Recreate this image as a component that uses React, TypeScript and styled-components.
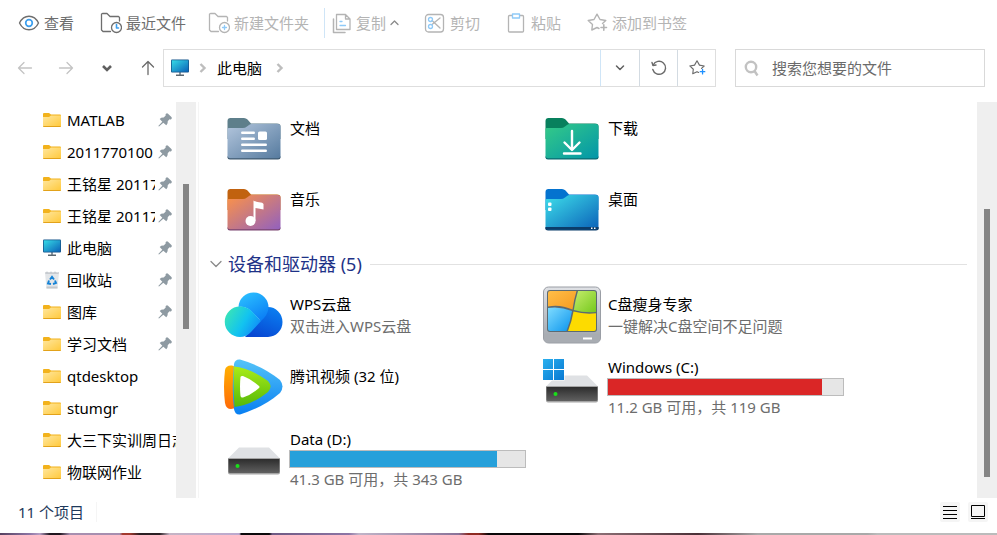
import React from 'react';
import styled, { createGlobalStyle, css } from 'styled-components';

const GlobalStyle = createGlobalStyle`
  * { box-sizing: border-box; }
  body {
    margin: 0;
    background: #fff;
    color: #000;
    font: 15px/22px "Noto Sans", "Noto Sans CJK SC", sans-serif;
  }
  button, input { font: inherit; }
`;

const Window = styled.div`
  display: flex;
  flex-direction: column;
  min-height: 100vh;
  background: #fff;
`;

/* ---------- toolbar ---------- */

const Toolbar = styled.div`
  display: flex;
  align-items: center;
  height: 46px;
  padding-left: 18px;
`;

const ToolGroup = styled.div<{ $gap: number }>`
  display: flex;
  gap: ${(p) => p.$gap}px;
`;

const ToolButton = styled.button<{ $wide?: boolean }>`
  display: flex;
  align-items: center;
  gap: 4px;
  padding: 0;
  border: 0;
  background: none;
  color: #6e6e6e;
  white-space: nowrap;
  ${(p) => p.$wide && css`min-width: 60px;`}
  &:disabled { color: #b4b4b4; }
`;

const ToolDivider = styled.span`
  width: 1px;
  height: 30px;
  margin: 0 5px 0 15px;
  background: #cfe5f7;
`;

/* ---------- address row ---------- */

const AddressRow = styled.div`
  display: flex;
  height: 38px;
  margin-top: 3px;
  padding-right: 12px;
`;

const NavButtons = styled.nav`
  display: flex;
  align-items: center;
  gap: 21px;
  width: 163px;
  padding-left: 15px;
`;

const NavButton = styled.button`
  display: flex;
  justify-content: center;
  width: 20px;
  padding: 0;
  border: 0;
  background: none;
`;

const AddressBar = styled.div`
  display: flex;
  flex: 1;
  align-items: stretch;
  border: 1px solid #dedede;
`;

const Crumbs = styled.div`
  display: flex;
  flex: 1;
  align-items: center;
  gap: 10px;
  padding-left: 7px;
`;

const CrumbLink = styled.a`
  padding-right: 4px;
  color: #000;
  text-decoration: none;
`;

const AddressButton = styled.button<{ $first?: boolean }>`
  display: flex;
  align-items: center;
  justify-content: center;
  width: ${(p) => (p.$first ? 39 : 38)}px;
  padding: 0;
  border: 0;
  border-left: 1px solid ${(p) => (p.$first ? '#cfe5f7' : '#d3dbe2')};
  background: none;
`;

const SearchBox = styled.label`
  display: flex;
  align-items: center;
  gap: 12px;
  width: 250px;
  margin-left: 19px;
  padding: 0 8px;
  border: 1px solid #d9d9d9;
`;

const SearchInput = styled.input`
  flex: 1;
  min-width: 0;
  padding: 0;
  border: 0;
  outline: 0;
  background: none;
  &::placeholder { color: #6b6b6b; opacity: 1; }
`;

/* ---------- body ---------- */

const Body = styled.div`
  display: flex;
  flex: 1;
  margin-top: 15px;
`;

const Sidebar = styled.ul`
  width: 176px;
  margin: 0;
  padding: 2px 0 0 43px;
  list-style: none;
`;

const SideItem = styled.li`
  display: flex;
  align-items: center;
  height: 32px;
`;

const SideLink = styled.a`
  display: flex;
  flex: 1;
  align-items: center;
  gap: 6px;
  min-width: 0;
  color: #000;
  text-decoration: none;
`;

const SideLabel = styled.span`
  flex: 1;
  overflow: hidden;
  white-space: nowrap;
  line-height: 32px;
`;

const PinSlot = styled.span`
  display: flex;
  width: 21px;
  padding-left: 3px;
`;

const ScrollTrack = styled.div`
  flex: none;
  width: 20px;
  padding: 0 7px;
  background: #efefef;
`;

const ScrollThumb = styled.div<{ $offset: number; $length: number }>`
  height: ${(p) => p.$length}px;
  margin-top: ${(p) => p.$offset}px;
  background: #858585;
`;

const Content = styled.main`
  flex: 1;
  min-width: 0;
  margin-left: 2px;
  padding: 1px 10px 0 11px;
  border-left: 1px solid #f5f5f5;
`;

const Tiles = styled.div<{ $row: number }>`
  display: grid;
  grid-template-columns: repeat(auto-fill, 318px);
  grid-auto-rows: ${(p) => p.$row}px;
  padding-left: 14px;
`;

const Tile = styled.article`
  display: flex;
  gap: 5px;
`;

const TileIcon = styled.span`
  display: flex;
  align-items: center;
  width: 60px;
  svg { flex: none; }
`;

const TileInfo = styled.div<{ $drive?: boolean }>`
  display: flex;
  flex-direction: column;
  padding-top: ${(p) => (p.$drive ? 6 : 15)}px;
`;

const TileName = styled.span`
  padding-left: 1px;
  line-height: 21px;
  white-space: nowrap;
`;

const TileNote = styled.span`
  padding-left: 1px;
  color: #6d6d6d;
  white-space: nowrap;
`;

const Meter = styled.div`
  width: 237px;
  height: 18px;
  border: 1px solid #bcbcbc;
  background: #e6e6e6;
`;

const MeterFill = styled.div<{ $color: string }>`
  height: 100%;
  background: ${(p) => p.$color};
`;

const SectionHead = styled.h2`
  display: flex;
  align-items: center;
  gap: 6px;
  height: 34px;
  margin: 0;
  padding-top: 4px;
  color: #1e3287;
  font-size: 18px;
  font-weight: 400;
  &::after {
    content: "";
    flex: 1;
    height: 1px;
    margin-left: 2px;
    background: #e2e2e2;
  }
`;

/* ---------- status bar ---------- */

const StatusBar = styled.footer`
  display: flex;
  align-items: flex-start;
  height: 35px;
  padding: 4px 9px 0 18px;
`;

const StatusText = styled.span`
  padding-right: 12px;
  border-right: 1px solid #f5f5f5;
  color: #1e395b;
  line-height: 20px;
`;

const ViewButtons = styled.div`
  display: flex;
  gap: 8px;
  margin-left: auto;
`;

const ViewButton = styled.button`
  display: flex;
  width: 20px;
  height: 20px;
  padding: 0;
  border: 0;
  border-radius: 2px;
  background: #f5f5f5;
`;

const DesktopEdge = styled.div`
  height: 2px;
  background: linear-gradient(90deg,
    #55405f 0, #8d76a6 3%, #b79fc4 4%, #20161f 5%, #20161f 6%, #a78fb0 7%, #a78fb0 12%,
    #a33a2e 12.3%, #a33a2e 13%, #2b2024 14%, #2b2024 16%, #c5b4c5 17%, #bba9cf 24%,
    #0c0a0c 24.2%, #0c0a0c 27%, #6f5a84 27.3%, #8d76a6 35%, #c0b4c8 36%, #8a7399 46%,
    #8e2b22 47%, #8e2b22 48%, #0a0809 49%, #0a0809 58%, #8b6e74 60%, #4a3037 70%,
    #a9a9a9 76%, #a9a9a9 87%, #bbb 88%, #bbb 100%);
`;

/* ---------- icons ---------- */

const line = { fill: 'none', strokeLinecap: 'round', strokeLinejoin: 'round' } as const;

const EyeIcon = () => (
  <svg width="22" height="22" viewBox="0 0 22 22" {...line} strokeWidth="1.4">
    <path d="M1.5 11C3.8 6.300 7 4.200 11 4.200S18.200 6.300 20.500 11C18.200 15.700 15 17.800 11 17.800S3.800 15.700 1.500 11Z" stroke="#6e6e6e" />
    <circle cx="11" cy="11" r="3.300" stroke="#3d9fee" strokeWidth="1.700" />
  </svg>
);

const FolderBadge = ({ color, children }: { color: string; children: React.ReactNode }) => (
  <svg width="22" height="22" viewBox="0 0 22 22" {...line} strokeWidth="1.300">
    <path d="M10.500 19.500H3L1.500 18V2L2.500 1.500H7L10 4.500H18.500L19.500 5.500V9" stroke={color} />
    <circle cx="16.500" cy="15.500" r="5" stroke={color} fill="#fff" />
    {children}
  </svg>
);

const CopyIcon = () => (
  <svg width="22" height="22" viewBox="0 0 22 22" {...line} stroke="#b4b4b4" strokeWidth="1.300">
    <path d="M6.500 2.500H15.500L20 7V17.500H6.500ZM15.500 2.500V7H20" />
    <path d="M3.500 7V20.500H15" strokeWidth="1.500" />
    <path d="M10 9.500H12M10 13.500H15.500" stroke="#8fcaf8" />
  </svg>
);

const CutIcon = () => (
  <svg width="22" height="22" viewBox="0 0 22 22" {...line} stroke="#b4b4b4" strokeWidth="1.300">
    <rect x="1.500" y="2.500" width="18" height="17.500" rx="3" />
    <path d="M8 12.500 16 6M8 8.500 16 16" />
    <circle cx="6.500" cy="7.500" r="2" stroke="#8fcaf8" />
    <circle cx="6.500" cy="14.500" r="2" stroke="#8fcaf8" />
  </svg>
);

const PasteIcon = () => (
  <svg width="22" height="22" viewBox="0 0 22 22" {...line} stroke="#b4b4b4" strokeWidth="1.300">
    <rect x="3.500" y="3.500" width="15" height="16.500" rx="1" />
    <path d="M7.500 2H14.500V6H7.500Z" stroke="#8fcaf8" fill="#fff" />
  </svg>
);

const StarPlus = ({ size, color, plus }: { size: number; color: string; plus: string }) => (
  <svg width={size} height={size} viewBox="0 0 22 22" {...line} stroke={color} strokeWidth="1.400">
    <path d="M13 16.500 11 15.500 5.800 18 6.500 12.500 2.200 8.500 8 7.500 11 2.200 14 7.500 19.800 8.500 16.500 11.500" />
    <path d="M15 15.500H20.500M17.800 12.800V18.200" stroke={plus} strokeWidth="1.600" />
  </svg>
);

const CaretUp = () => (
  <svg width="9" height="8" viewBox="0 0 9 8" {...line} stroke="#8a8a8a" strokeWidth="1.300">
    <path d="M1 5.500 4.500 2 8 5.500" />
  </svg>
);

const Arrow = ({ d, color }: { d: string; color: string }) => (
  <svg width="16" height="16" viewBox="0 0 16 16" {...line} stroke={color} strokeWidth="1.300">
    <path d={d} />
  </svg>
);

const CrumbChevron = () => (
  <svg width="8" height="10" viewBox="0 0 8 10" fill="none" stroke="#bdbdbd" strokeWidth="2.400">
    <path d="M1.500 1 5.500 5 1.500 9" />
  </svg>
);

const MonitorIcon = () => (
  <svg width="18" height="18" viewBox="0 0 18 18">
    <defs>
      <linearGradient id="screen" x1="0" y1="0" x2="1" y2="1">
        <stop offset="0" stopColor="#36dbe6" />
        <stop offset="1" stopColor="#0b62b8" />
      </linearGradient>
    </defs>
    <path d="M8 13H10V16H8Z" fill="#8b98a2" />
    <path d="M5 15.500H13V17H5Z" fill="#5b6770" />
    <rect y=".5" width="18" height="13" rx="1" fill="#17568c" />
    <rect x=".8" y="1.300" width="16.400" height="11.400" fill="url(#screen)" />
  </svg>
);

const SmallFolder = () => (
  <svg width="18" height="18" viewBox="0 0 18 18">
    <defs>
      <linearGradient id="yellow" x1="0" y1="0" x2="1" y2="1">
        <stop offset="0" stopColor="#ffe79f" />
        <stop offset="1" stopColor="#ffc93c" />
      </linearGradient>
    </defs>
    <path d="M0 3Q0 2 1 2H6L8 3.500H17Q18 3.500 18 4.500V8H0Z" fill="#f2b21c" />
    <path d="M0 6H6L8 4.500H18V15.500H0Z" fill="url(#yellow)" />
    <path d="M0 15H18L17.500 16H.5Z" fill="#e2a21a" />
  </svg>
);

const RecycleIcon = () => (
  <svg width="18" height="18" viewBox="0 0 18 18">
    <path d="M2 2 16 2 14.500 17.500H3.500Z" fill="#e3e6e9" />
    <path d="M2 1.500 4 .5 6 1.500 8 .5 10 1.500 12 .5 14 1.500 16 1 15.500 3H2.500Z" fill="#c7cbd0" />
    <path d="M3.500 15.500H14.500V17.500H3.500Z" fill="#c3c8cc" />
    <path d="M7 8.500 9 5.800 11 8.500M12 9.500 13 12 10 13M8 13 5 12.500 6 9.500" fill="none" stroke="#1583d6" strokeWidth="1.900" />
  </svg>
);

const PinIcon = () => (
  <svg width="14" height="14" viewBox="0 0 14 14" fill="#8e9aa2">
    <path d="M8 .8Q9-.1 10 .7L13.400 4Q14.200 5 13.400 5.900 12.500 6.700 11.500 6.300L9.700 8.200Q10 10.600 8.300 12.200L5.300 9.700 1 13.600.3 13 4.300 8.700 1.700 5.900Q3.400 4.200 5.700 4.500L7.700 2.500Q7.300 1.500 8 .8Z" />
  </svg>
);

type FolderArt = { id: string; tab: string; from: string; to: string; edge: string; glyph: React.ReactNode };

const BigFolder = ({ id, tab, from, to, edge, glyph }: FolderArt) => (
  <svg width="60" height="60" viewBox="0 0 60 60">
    <defs>
      <linearGradient id={id} x1="0" y1="0" x2="1" y2="1">
        <stop offset="0" stopColor={from} />
        <stop offset="1" stopColor={to} />
      </linearGradient>
    </defs>
    <path d="M3.500 12Q3.500 9 6.500 9H20Q22 9 23.500 10.500L27 14.500H53Q56.500 14.500 56.500 17V30H3.500Z" fill={tab} />
    <path d="M3.500 20Q3.500 19 5 19H19Q21 19 23 17.500L25 16Q26 15 28 15H53.500Q56.500 15 56.500 18V47.500Q56.500 50 54 50H6Q3.500 50 3.500 47.500Z" fill={`url(#${id})`} />
    <path d="M3.500 47V48Q3.500 50.500 6 50.500H54Q56.500 50.500 56.500 48V47Q56 49.200 54 49.200H6Q4 49.200 3.500 47Z" fill={edge} />
    {glyph}
  </svg>
);

const folderArt: Record<string, FolderArt> = {
  documents: {
    id: 'fDoc', tab: '#5e7f8b', from: '#b3c6dd', to: '#557a9e', edge: '#3f5a70',
    glyph: (
      <g fill="#fff">
        <rect x="17" y="22.500" width="14" height="2.500" rx="1.200" />
        <rect x="17" y="28.500" width="14" height="2.500" rx="1.200" />
        <rect x="17" y="34.500" width="26" height="2.500" rx="1.200" />
        <rect x="17" y="40.500" width="26" height="2.500" rx="1.200" />
        <rect x="34" y="22.500" width="9" height="8.500" rx="1.500" />
      </g>
    ),
  },
  music: {
    id: 'fMus', tab: '#c1620f', from: '#fd9346', to: '#9160c0', edge: '#7a4470',
    glyph: (
      <g fill="#fff">
        <circle cx="26.500" cy="41" r="5" />
        <path d="M29.500 20.500Q32 22 35 22.200 39 22.500 39.500 24V29.500Q36 28.800 31.500 28V41H29.500Z" />
      </g>
    ),
  },
  downloads: {
    id: 'fDown', tab: '#08805d', from: '#35cb87', to: '#0295a9', edge: '#0a6a70',
    glyph: <path d="M30 22V40M22.500 33.500 30 41 37.500 33.500M22 44.500H38.500" fill="none" stroke="#fff" strokeWidth="2.400" strokeLinecap="round" strokeLinejoin="round" />,
  },
  desktop: {
    id: 'fDesk', tab: '#0473cf', from: '#3edfea', to: '#0a60b8', edge: '#0b3c6a',
    glyph: (
      <g fill="#fff">
        <rect x="3.500" y="47" width="53" height="2.500" fill="#0b3c6a" />
        <rect x="6" y="22.500" width="3.500" height="3.500" rx="1" />
        <rect x="6" y="27.500" width="3.500" height="3.500" rx="1" />
        <rect x="49" y="47.500" width="1.500" height="1.500" />
        <rect x="52" y="47.500" width="1.500" height="1.500" />
      </g>
    ),
  },
};

const CloudIcon = () => (
  <svg width="60" height="60" viewBox="0 0 60 60">
    <defs>
      <linearGradient id="cTop" x1=".2" y1="0" x2=".8" y2="1">
        <stop offset="0" stopColor="#2bc0ff" />
        <stop offset="1" stopColor="#0a7cf5" />
      </linearGradient>
      <linearGradient id="cLeft" x1="0" y1=".2" x2="1" y2=".7">
        <stop offset="0" stopColor="#3be6b4" />
        <stop offset=".55" stopColor="#12c3f0" />
        <stop offset="1" stopColor="#1187f8" />
      </linearGradient>
      <linearGradient id="cRight" x1=".8" y1="0" x2=".3" y2="1">
        <stop offset="0" stopColor="#0a80f2" />
        <stop offset="1" stopColor="#0847d2" />
      </linearGradient>
    </defs>
    <path d="M44 22A14.500 15 0 0 1 44 52H21L37 33Z" fill="url(#cRight)" />
    <path d="M14.500 22A15 15 0 0 1 44.500 23Q44 30 37 36L27 26Q21 21 14.500 22Z" fill="url(#cTop)" />
    <path d="M16 21.500Q23 21.500 27.500 26L37 36 27 47Q22.500 52 16 52A15 15 0 0 1 16 21.500Z" fill="url(#cLeft)" />
  </svg>
);

const VideoIcon = () => (
  <svg width="60" height="60" viewBox="2 0 60 60">
    <defs>
      <linearGradient id="vBlue" x1="0" y1="0" x2="0" y2="1">
        <stop offset="0" stopColor="#55c4f8" />
        <stop offset="1" stopColor="#087ff2" />
      </linearGradient>
      <linearGradient id="vOrange" x1="0" y1="0" x2="0" y2="1">
        <stop offset="0" stopColor="#ffb000" />
        <stop offset="1" stopColor="#ff6a08" />
      </linearGradient>
      <linearGradient id="vGreen" x1="0" y1="0" x2="0" y2="1">
        <stop offset="0" stopColor="#a9ec18" />
        <stop offset="1" stopColor="#55b809" />
      </linearGradient>
    </defs>
    <path d="M3 13Q4 8 10 8.500L14 10V51L9 52Q4 52 3 46Q1 30 3 13Z" fill="url(#vOrange)" />
    <path d="M12 7Q13 2 18 2.500 41 9 58 23 63 29.500 58 36 42 50 18 57.500 13 58 12 52Q9.500 30 12 7Z" fill="url(#vBlue)" />
    <path d="M12 9.500Q28 11 46 24 51 29.500 46 35 30 48 12.500 50Q11 30 12 9.500Z" fill="url(#vGreen)" />
    <path d="M18.500 20Q19 18.500 21 19 29 22 37 29 38 30 37 31 29 38 21 40.500 19 41 18.500 39Q17.500 30 18.500 20Z" fill="#fff" />
  </svg>
);

const CleanerIcon = () => (
  <svg width="60" height="60" viewBox="0 0 60 60">
    <defs>
      <linearGradient id="kCase" x1="0" y1="0" x2="0" y2="1">
        <stop offset="0" stopColor="#dfe1e5" />
        <stop offset="1" stopColor="#9ea3aa" />
      </linearGradient>
      <linearGradient id="kO" x1="0" y1="0" x2="1" y2="1">
        <stop offset="0" stopColor="#ffbe48" />
        <stop offset="1" stopColor="#f59a20" />
      </linearGradient>
      <linearGradient id="kG" x1="0" y1="0" x2="1" y2="1">
        <stop offset="0" stopColor="#c5ec6c" />
        <stop offset="1" stopColor="#76c91d" />
      </linearGradient>
      <linearGradient id="kB" x1="0" y1="0" x2="1" y2="1">
        <stop offset="0" stopColor="#7fdcff" />
        <stop offset="1" stopColor="#0b94ed" />
      </linearGradient>
    </defs>
    <rect x="1.500" y="2" width="57" height="56" rx="5" fill="url(#kCase)" stroke="#9a9ea5" />
    <path d="M2 49H58V53Q58 57.500 54 57.500H6Q2 57.500 2 53Z" fill="#a8acb2" />
    <rect x="5" y="5" width="50" height="42" rx="3" fill="#5c6a72" />
    <path d="M8 6H34.500Q32 14 30.500 24.500 18 19 6 21.500V8Q6 6 8 6Z" fill="url(#kO)" />
    <path d="M36 6H52Q54 6 54 8V27Q42 28 31.800 25 33.500 14 36 6Z" fill="url(#kG)" />
    <path d="M6 23Q18 21 30 26 28.500 36 24.500 46H8Q6 46 6 44Z" fill="url(#kB)" />
    <path d="M31.500 26.500Q42 29.500 54 28.300V44Q54 46 52 46H26Q30 36 31.500 26.500Z" fill="#fddb00" />
    <rect x="41" y="52.500" width="9" height="2" fill="#fff" />
  </svg>
);

const DriveIcon = ({ system }: { system?: boolean }) => (
  <svg width="60" height="60" viewBox="0 0 60 60">
    <defs>
      <linearGradient id="dFace" x1="0" y1="0" x2="0" y2="1">
        <stop offset="0" stopColor="#2d2d2d" />
        <stop offset="1" stopColor="#606060" />
      </linearGradient>
      <linearGradient id="dWin" x1="0" y1="0" x2="1" y2="1">
        <stop offset="0" stopColor="#2bb0ee" />
        <stop offset="1" stopColor="#0878d2" />
      </linearGradient>
    </defs>
    <path d="M15 18.500H45L56 29.500H4Z" fill="#dfe1e4" />
    <path d="M4 29H56V43.500Q56 45.500 54 45.500H6Q4 45.500 4 43.500Z" fill="#a5a5a5" />
    <path d="M4.500 30H55.500V42.500Q55.500 44 54 44H6Q4.500 44 4.500 42.500Z" fill="url(#dFace)" />
    <circle cx="13.500" cy="37" r="2" fill="#19e019" />
    {system && (
      <g>
        <path d="M1 2H22.500V23.500H1Z" fill="#fff" />
        <path d="M1 2H11V12H1ZM12 2H22V12H12ZM1 13H11V23H1ZM12 13H22V23H12Z" fill="url(#dWin)" />
      </g>
    )}
  </svg>
);

/* ---------- data ---------- */

type Place = { label: string; icon?: 'monitor' | 'bin'; pinned?: boolean };

const places: Place[] = [
  { label: 'MATLAB', pinned: true },
  { label: '2011770100', pinned: true },
  { label: '王铭星 20117', pinned: true },
  { label: '王铭星 20117', pinned: true },
  { label: '此电脑', icon: 'monitor', pinned: true },
  { label: '回收站', icon: 'bin', pinned: true },
  { label: '图库', pinned: true },
  { label: '学习文档', pinned: true },
  { label: 'qtdesktop' },
  { label: 'stumgr' },
  { label: '大三下实训周日志' },
  { label: '物联网作业' },
];

const folders = [
  { label: '文档', art: folderArt.documents },
  { label: '下载', art: folderArt.downloads },
  { label: '音乐', art: folderArt.music },
  { label: '桌面', art: folderArt.desktop },
];

const devices = [
  { label: 'WPS云盘', note: '双击进入WPS云盘', icon: <CloudIcon /> },
  { label: 'C盘瘦身专家', note: '一键解决C盘空间不足问题', icon: <CleanerIcon /> },
  { label: '腾讯视频 (32 位)', icon: <VideoIcon /> },
  { label: 'Windows (C:)', note: '11.2 GB 可用，共 119 GB', icon: <DriveIcon system />, used: 91, color: '#da2626' },
  { label: 'Data (D:)', note: '41.3 GB 可用，共 343 GB', icon: <DriveIcon />, used: 88, color: '#26a0da' },
];

const placeIcon = (icon?: Place['icon']) =>
  icon === 'monitor' ? <MonitorIcon /> : icon === 'bin' ? <RecycleIcon /> : <SmallFolder />;

export default function App() {
  return (
    <Window>
      <GlobalStyle />
      <Toolbar>
        <ToolGroup $gap={22}>
          <ToolButton $wide><EyeIcon />查看</ToolButton>
          <ToolButton>
            <FolderBadge color="#6e6e6e"><path d="M16.500 12.500V16H18.500" stroke="#3d9fee" strokeWidth="1.600" /></FolderBadge>
            最近文件
          </ToolButton>
          <ToolButton disabled>
            <FolderBadge color="#b4b4b4"><path d="M16.500 13.500V17.500M14.500 15.500H18.500" stroke="#8fcaf8" /></FolderBadge>
            新建文件夹
          </ToolButton>
        </ToolGroup>
        <ToolDivider />
        <ToolGroup $gap={25}>
          <ToolButton disabled><CopyIcon />复制<CaretUp /></ToolButton>
          <ToolButton disabled><CutIcon />剪切</ToolButton>
          <ToolButton disabled><PasteIcon />粘贴</ToolButton>
          <ToolButton disabled><StarPlus size={22} color="#b4b4b4" plus="#b4b4b4" />添加到书签</ToolButton>
        </ToolGroup>
      </Toolbar>

      <AddressRow>
        <NavButtons aria-label="导航">
          <NavButton aria-label="后退"><Arrow color="#c4c4c4" d="M14.500 8H1.500M7 2.500 1.500 8 7 13.500" /></NavButton>
          <NavButton aria-label="前进"><Arrow color="#c4c4c4" d="M1.500 8H14.500M9 2.500 14.500 8 9 13.500" /></NavButton>
          <NavButton aria-label="历史记录">
            <svg width="12" height="10" viewBox="0 0 12 10" fill="none" stroke="#606060" strokeWidth="2.600"><path d="M2 3 6 7 10 3" /></svg>
          </NavButton>
          <NavButton aria-label="上一级"><Arrow color="#6a6a6a" d="M8 14.500V1.500M2.500 7 8 1.500 13.500 7" /></NavButton>
        </NavButtons>
        <AddressBar>
          <Crumbs>
            <MonitorIcon />
            <CrumbChevron />
            <CrumbLink href="#pc">此电脑</CrumbLink>
            <CrumbChevron />
          </Crumbs>
          <AddressButton $first aria-label="展开">
            <svg width="10" height="8" viewBox="0 0 10 8" {...line} stroke="#606060" strokeWidth="1.500"><path d="M1.500 2 5 5.500 8.500 2" /></svg>
          </AddressButton>
          <AddressButton aria-label="刷新">
            <svg width="18" height="18" viewBox="0 0 18 18" {...line} stroke="#6a6a6a" strokeWidth="1.400">
              <path d="M3.200 6A6.500 6.500 0 1 1 2.800 10.500" />
              <path d="M2 3.500 3 6.500 6 6" />
            </svg>
          </AddressButton>
          <AddressButton aria-label="添加书签"><StarPlus size={18} color="#6a6a6a" plus="#1e90ff" /></AddressButton>
        </AddressBar>
        <SearchBox>
          <svg width="16" height="18" viewBox="0 0 16 18" fill="none" stroke="#c2c2c2" strokeWidth="2.400">
            <circle cx="7" cy="8" r="5.200" />
            <path d="M10.500 12 13.500 16.500" />
          </svg>
          <SearchInput type="search" aria-label="搜索" placeholder="搜索您想要的文件" />
        </SearchBox>
      </AddressRow>

      <Body>
        <Sidebar>
          {places.map((place, i) => (
            <SideItem key={i}>
              <SideLink href={`#place-${i}`}>
                {placeIcon(place.icon)}
                <SideLabel>{place.label}</SideLabel>
              </SideLink>
              {place.pinned && <PinSlot><PinIcon /></PinSlot>}
            </SideItem>
          ))}
        </Sidebar>
        <ScrollTrack><ScrollThumb $offset={82} $length={145} /></ScrollTrack>
        <Content>
          <Tiles $row={71}>
            {folders.map((folder) => (
              <Tile key={folder.label}>
                <TileIcon><BigFolder {...folder.art} /></TileIcon>
                <TileInfo><TileName>{folder.label}</TileName></TileInfo>
              </Tile>
            ))}
          </Tiles>
          <SectionHead>
            <svg width="12" height="8" viewBox="0 0 12 8" {...line} stroke="#8a8a8a" strokeWidth="1.300"><path d="M1 1.500 6 6.500 11 1.500" /></svg>
            设备和驱动器 (5)
          </SectionHead>
          <Tiles $row={72}>
            {devices.map((device) => (
              <Tile key={device.label}>
                <TileIcon>{device.icon}</TileIcon>
                <TileInfo $drive={device.used !== undefined}>
                  <TileName>{device.label}</TileName>
                  {device.used !== undefined && (
                    <Meter role="meter" aria-label={device.label} aria-valuenow={device.used} aria-valuemin={0} aria-valuemax={100}>
                      <MeterFill $color={device.color} style={{ width: `${device.used}%` }} />
                    </Meter>
                  )}
                  {device.note && <TileNote>{device.note}</TileNote>}
                </TileInfo>
              </Tile>
            ))}
          </Tiles>
        </Content>
        <ScrollTrack><ScrollThumb $offset={107} $length={268} /></ScrollTrack>
      </Body>

      <StatusBar>
        <StatusText>11 个项目</StatusText>
        <ViewButtons>
          <ViewButton aria-label="详细信息">
            <svg width="20" height="20" viewBox="0 0 20 20" stroke="#000"><path d="M3 4.500H17M3 8.500H17M3 12.500H17M3 16.500H17" /></svg>
          </ViewButton>
          <ViewButton aria-label="大图标">
            <svg width="20" height="20" viewBox="0 0 20 20" stroke="#000" fill="none"><path d="M3.500 3.500H16.500V14.500H3.500ZM3 16.500H17" /></svg>
          </ViewButton>
        </ViewButtons>
      </StatusBar>
      <DesktopEdge />
    </Window>
  );
}
